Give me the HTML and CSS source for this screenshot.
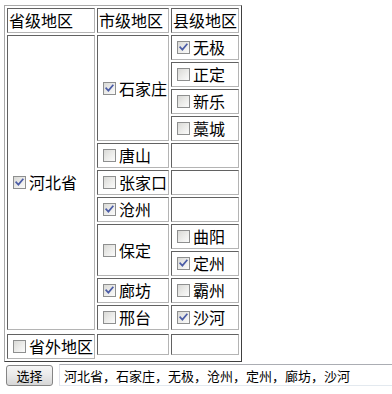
FILE: index.html
```html
<!doctype html>
<html lang="zh-cn">
<head>
<title>地区选择</title>
<meta charset="UTF-8">
<link rel="stylesheet" href="styles.css">
</head>
<body>
    <div id="area">
        <div class="cell">省级地区</div>
        <div class="cell">市级地区</div>
        <div class="cell">县级地区</div>

        <div class="cell span11"><span class="cb on"><svg viewBox="0 0 11 11"><path d="M2.2 5.2 L4.4 7.6 L8.8 2.4"/></svg></span>河北省</div>
        <div class="cell span4"><span class="cb on"><svg viewBox="0 0 11 11"><path d="M2.2 5.2 L4.4 7.6 L8.8 2.4"/></svg></span>石家庄</div>
        <div class="cell"><span class="cb on"><svg viewBox="0 0 11 11"><path d="M2.2 5.2 L4.4 7.6 L8.8 2.4"/></svg></span>无极</div>
        <div class="cell"><span class="cb"></span>正定</div>
        <div class="cell"><span class="cb"></span>新乐</div>
        <div class="cell"><span class="cb"></span>藁城</div>

        <div class="cell"><span class="cb"></span>唐山</div>
        <div class="cell"></div>
        <div class="cell"><span class="cb"></span>张家口</div>
        <div class="cell"></div>
        <div class="cell"><span class="cb on"><svg viewBox="0 0 11 11"><path d="M2.2 5.2 L4.4 7.6 L8.8 2.4"/></svg></span>沧州</div>
        <div class="cell"></div>

        <div class="cell span2"><span class="cb"></span>保定</div>
        <div class="cell"><span class="cb"></span>曲阳</div>
        <div class="cell"><span class="cb on"><svg viewBox="0 0 11 11"><path d="M2.2 5.2 L4.4 7.6 L8.8 2.4"/></svg></span>定州</div>

        <div class="cell"><span class="cb on"><svg viewBox="0 0 11 11"><path d="M2.2 5.2 L4.4 7.6 L8.8 2.4"/></svg></span>廊坊</div>
        <div class="cell"><span class="cb"></span>霸州</div>
        <div class="cell"><span class="cb"></span>邢台</div>
        <div class="cell"><span class="cb on"><svg viewBox="0 0 11 11"><path d="M2.2 5.2 L4.4 7.6 L8.8 2.4"/></svg></span>沙河</div>

        <div class="cell last"><span class="cb"></span>省外地区</div>
        <div class="cell last empty"></div>
        <div class="cell last empty"></div>
    </div>

    <div id="bar">
        <button class="btn">选择</button>
        <input class="txt" type="text" value="河北省，石家庄，无极，沧州，定州，廊坊，沙河">
    </div>
</body>
</html>
```

FILE: styles.css
```css
html,body{overflow:hidden;}
body{margin:5px 0 0 4px;padding:0;background:#fff;color:#000;font-family:"Noto Sans CJK SC","Microsoft YaHei",sans-serif;}

#area{display:grid;width:238px;box-sizing:border-box;grid-template-columns:88px 72px 68px;grid-template-rows:repeat(12,25px) 27px;gap:2px;padding:2px;border:1px solid;border-color:#a9a9a9 #404040 #404040 #a9a9a9;}
#area .cell{box-sizing:border-box;display:flex;align-items:center;padding:0 1px;border:1px solid;border-color:#626262 #b4b4b4 #b4b4b4 #626262;font-size:16px;line-height:21px;white-space:nowrap;}
#area .span11{grid-row:span 11;}
#area .span4{grid-row:span 4;}
#area .span2{grid-row:span 2;}
#area .last{margin-top:2px;height:25px;}
#area .empty{height:21px;align-self:start;}

.cb{flex:none;display:inline-block;box-sizing:border-box;width:13px;height:13px;margin:0 3px 0 4px;border:1px solid #8e8f8f;background:linear-gradient(135deg,#d9d9d6 0%,#ededeb 55%,#fbfbfb 100%);}
.cb svg{display:block;width:11px;height:11px;}
.cb svg path{fill:none;stroke:#4b5ca6;stroke-width:1.7;stroke-linecap:square;}

#bar{display:flex;align-items:center;margin-top:2px;padding-left:2px;width:400px;}
.btn{flex:none;box-sizing:border-box;width:47px;height:21px;margin:0;padding:0;border:1px solid #858585;border-radius:3px;background:linear-gradient(#f6f6f6,#e9e9e9 50%,#d6d6d6);font-family:"Noto Sans CJK SC",sans-serif;font-size:13px;line-height:17px;color:#000;}
.txt{box-sizing:border-box;flex:none;width:340px;height:22px;margin:0 0 0 6px;padding:0 4px;border:1px solid;border-color:#abadb3 #e3e9ef #e3e9ef #e2e3ea;font-family:"Noto Sans CJK SC",sans-serif;font-size:13px;color:#000;outline:none;}
```
